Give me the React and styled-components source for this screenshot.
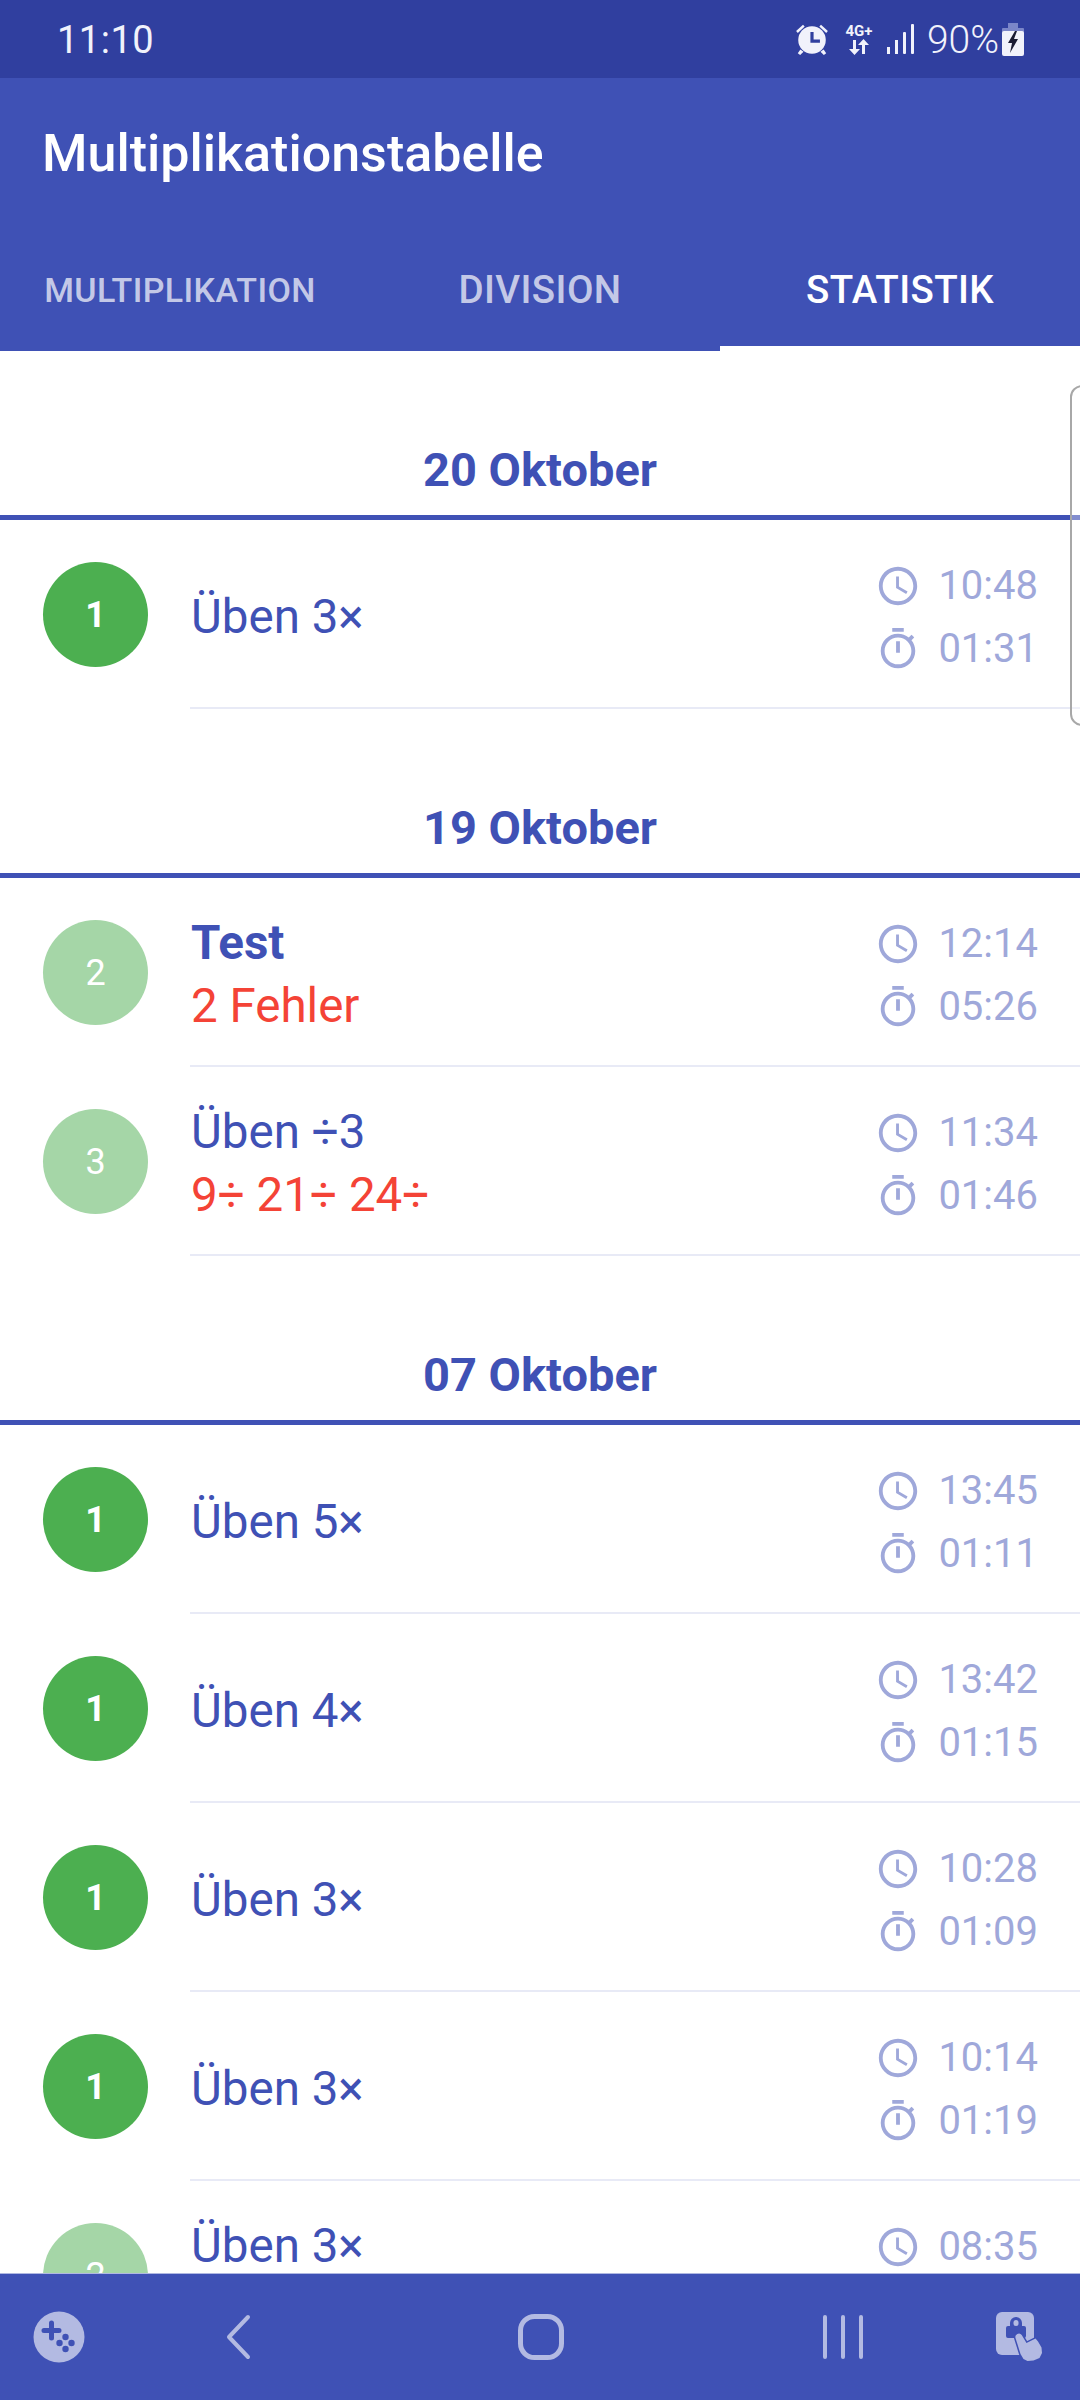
import React from "react";
import styled, { createGlobalStyle } from "styled-components";

const Global = createGlobalStyle`
  html, body { margin: 0; padding: 0; background: #fff; }
  * { box-sizing: border-box; }
`;

const Screen = styled.div`
  position: relative;
  width: 1080px;
  height: 2400px;
  display: flex;
  flex-direction: column;
  overflow: hidden;
  font-family: Roboto, "Noto Sans", sans-serif;
  background: #fff;
`;

const StatusBar = styled.div`
  height: 78px;
  flex: none;
  background: #303f9f;
  display: flex;
  align-items: center;
  justify-content: space-between;
  padding: 0 56px 0 57px;
  color: #f1f2fb;
`;
const Clock = styled.span`
  font-size: 38px;
  line-height: 1;
  letter-spacing: 0.5px;
  margin-top: 2px;
`;
const StatusIcons = styled.div`
  display: flex;
  align-items: center;
`;
const Network = styled.div`
  width: 32px;
  margin: 0 12px 0 13px;
  display: flex;
  flex-direction: column;
  align-items: center;
`;
const NetworkLabel = styled.span`
  font-size: 15px;
  line-height: 15px;
  font-weight: 700;
  white-space: nowrap;
`;
const Percent = styled.span`
  font-size: 39px;
  line-height: 1;
  font-weight: 300;
  margin: 2px 3px 0 12px;
`;

const AppBar = styled.header`
  flex: none;
  height: 273px;
  background: #3f51b5;
  display: flex;
  flex-direction: column;
`;
const Title = styled.h1`
  margin: 0;
  height: 152px;
  padding: 47px 0 0 42px;
  color: #fff;
  font-size: 52px;
  line-height: 58px;
  font-weight: 500;
`;
const Tabs = styled.nav`
  flex: 1;
  display: grid;
  grid-template-columns: repeat(3, 1fr);
`;
const Tab = styled.div`
  display: flex;
  align-items: center;
  justify-content: center;
  padding-top: 3px;
  font-size: ${(p) => p.$size}px;
  font-weight: 500;
  letter-spacing: 0.4px;
  color: ${(p) => (p.$active ? "#ffffff" : "rgba(255,255,255,0.7)")};
  border-bottom: 5px solid ${(p) => (p.$active ? "#ffffff" : "transparent")};
`;

const List = styled.main`
  flex: 1;
  min-height: 0;
  overflow: hidden;
`;
const SectionTitle = styled.div`
  height: 169px;
  display: flex;
  align-items: flex-end;
  justify-content: center;
  padding-bottom: 20px;
  color: #3f51b5;
  font-size: 47px;
  line-height: 50px;
  font-weight: 700;
  border-bottom: 5px solid #3f51b5;
`;
const Row = styled.div`
  height: 189px;
  display: flex;
  align-items: center;
  padding-left: 43px;
`;
const Badge = styled.div`
  width: 105px;
  height: 105px;
  flex: none;
  border-radius: 50%;
  display: flex;
  align-items: center;
  justify-content: center;
  color: #fff;
  font-size: 36px;
  font-weight: ${(p) => (p.$best ? 700 : 400)};
  background: ${(p) => (p.$best ? "#4caf50" : "#a5d6a7")};
`;
const RowBody = styled.div`
  flex: 1;
  height: 100%;
  margin-left: 42px;
  padding: 7px 42px 0 1px;
  display: flex;
  align-items: center;
  justify-content: space-between;
  border-bottom: 2px solid #e8eaf6;
`;
const Texts = styled.div`
  display: flex;
  flex-direction: column;
`;
const Name = styled.div`
  color: #3f51b5;
  font-size: 47.500px;
  line-height: 63px;
  font-weight: ${(p) => (p.$bold ? 700 : 400)};
`;
const Mistakes = styled.div`
  color: #f44336;
  font-size: 47.500px;
  line-height: 63px;
  min-height: 63px;
`;
const Times = styled.div`
  display: flex;
  flex-direction: column;
`;
const TimeLine = styled.div`
  height: 63px;
  display: flex;
  align-items: center;
  justify-content: flex-end;
  gap: 17px;
  color: #9fa8da;
  font-size: 40px;
`;

const NavBar = styled.footer`
  flex: none;
  height: 127px;
  background: #3f51b5;
  border-top: 1px solid #b0b8e2;
  display: grid;
  grid-template-columns: 118px 240px 366px 238px 118px;
  align-items: center;
`;
const NavSlot = styled.div`
  display: flex;
  align-items: center;
  justify-content: center;
`;
const EdgeHandle = styled.div`
  position: absolute;
  top: 385px;
  right: -14px;
  width: 24px;
  height: 341px;
  border: 2px solid #a8a8a8;
  border-radius: 12px;
  background: rgba(255, 255, 255, 0.35);
`;

const ClockIcon = () => (
  <svg width="46" height="46" viewBox="0 0 24 24" fill="#9fa8da">
    <path d="M11.99 2C6.47 2 2 6.48 2 12s4.47 10 9.99 10C17.52 22 22 17.52 22 12S17.52 2 11.99 2zM12 20c-4.42 0-8-3.58-8-8s3.58-8 8-8 8 3.58 8 8-3.58 8-8 8zm.5-13H11v6l5.25 3.15.75-1.23-4.5-2.67z" />
  </svg>
);
const TimerIcon = () => (
  <svg width="46" height="46" viewBox="0 0 24 24" fill="#9fa8da">
    <path d="M15 1H9v2h6V1zm-4 13h2V8h-2v6zm8.03-6.61l1.42-1.42c-.43-.51-.9-.99-1.41-1.41l-1.42 1.42C16.07 4.74 14.12 4 12 4c-4.97 0-9 4.03-9 9s4.02 9 9 9 9-4.03 9-9c0-2.12-.74-4.07-1.97-5.61zM12 20c-3.87 0-7-3.13-7-7s3.13-7 7-7 7 3.13 7 7-3.13 7-7 7z" />
  </svg>
);
const AlarmIcon = () => (
  <svg width="36" height="36" viewBox="0 0 34 34" fill="#f1f2fb">
    <circle cx="17" cy="18" r="13" />
    <path d="M2 9.500 8.500 3.500l1.600 1.800-6.500 6zM32 9.500l-6.500-6-1.600 1.800 6.500 6zM6 27l3 2-3.200 3.200-2.200-1.800zM28 27l-3 2 3.200 3.200 2.200-1.800z" />
    <path d="M15.500 10.500h3v7h6v3h-9z" fill="#303f9f" />
  </svg>
);
const ArrowsIcon = () => (
  <svg width="24" height="16" viewBox="0 0 24 16" fill="#f1f2fb">
    <path d="M5 1h3v9h4l-5.500 6L1 10h4zM17 15h-3V6H10l5.500-6L21 6h-4z" transform="translate(1 0)" />
  </svg>
);
const SignalIcon = () => (
  <svg width="28" height="30" viewBox="0 0 28 30" fill="#f1f2fb">
    <rect x="0" y="23" width="3" height="7" />
    <rect x="8" y="16" width="3" height="14" />
    <rect x="16" y="8" width="3" height="22" rx="1" />
    <rect x="24" y="0" width="3" height="30" rx="1" />
  </svg>
);
const BatteryIcon = () => (
  <svg width="22" height="33" viewBox="0 0 22 33">
    <rect x="6" y="0" width="10" height="6" fill="#7b86c8" />
    <rect x="0" y="5" width="22" height="6" rx="1" fill="#7b86c8" />
    <rect x="0" y="8" width="22" height="25" rx="2" fill="#f1f2fb" />
    <path d="M13 8 6 20h4l-2 10 8-14h-4l3-8z" fill="#1a1c33" />
  </svg>
);

const navColor = "#b3bae2";
const GameIcon = () => (
  <svg width="52" height="52" viewBox="0 0 52 52">
    <circle cx="26" cy="26" r="25.500" fill={navColor} />
    <path d="M16 12a2.500 2.500 0 0 1 5 0v5h5a2.500 2.500 0 0 1 0 5h-5v5a2.500 2.500 0 0 1-5 0v-5h-5a2.500 2.500 0 0 1 0-5h5z" fill="#3f51b5" />
    <circle cx="32.500" cy="26" r="3.200" fill="#3f51b5" />
    <circle cx="26.500" cy="32" r="3.200" fill="#3f51b5" />
    <circle cx="38.500" cy="32" r="3.200" fill="#3f51b5" />
    <circle cx="32.500" cy="38" r="3.200" fill="#3f51b5" />
  </svg>
);
const BackIcon = () => (
  <svg width="26" height="46" viewBox="0 0 26 46" fill="none" stroke={navColor} strokeWidth="4" strokeLinecap="round" strokeLinejoin="round">
    <path d="M23 3 4 23l19 20" />
  </svg>
);
const HomeIcon = () => (
  <svg width="46" height="46" viewBox="0 0 46 46" fill="none" stroke={navColor} strokeWidth="5">
    <rect x="2.500" y="2.500" width="41" height="41" rx="14" />
  </svg>
);
const RecentsIcon = () => (
  <svg width="42" height="44" viewBox="0 0 42 44" fill={navColor}>
    <rect x="1" y="0" width="4" height="44" rx="2" />
    <rect x="19" y="0" width="4" height="44" rx="2" />
    <rect x="37" y="0" width="4" height="44" rx="2" />
  </svg>
);
const LockTouchIcon = () => (
  <svg width="50" height="50" viewBox="0 0 50 50">
    <rect x="0" y="0" width="38" height="43" rx="6" fill={navColor} />
    <path d="M10 16a2 2 0 0 1 2-2h2v-3a6 6 0 0 1 12 0v3h2a2 2 0 0 1 2 2v8a2 2 0 0 1-2 2H12a2 2 0 0 1-2-2z" fill="#3f51b5" />
    <rect x="17.500" y="8" width="5" height="6" rx="2.500" fill={navColor} />
    <path
      d="M19.500 26a3.500 3.500 0 0 1 6.200-3l4.800 8 9-4.500 2.500 3 3.500 6 .5 5.500-2.500 5-6 2.500-6 .5-4-2-3-5z"
      fill={navColor}
      stroke="#3f51b5"
      strokeWidth="3"
      paintOrder="stroke"
      strokeLinejoin="round"
    />
  </svg>
);

const sections = [
  {
    date: "20 Oktober",
    rows: [{ n: 1, name: "Üben 3×", clock: "10:48", dur: "01:31" }],
  },
  {
    date: "19 Oktober",
    rows: [
      { n: 2, name: "Test", bold: true, sub: "2 Fehler", clock: "12:14", dur: "05:26" },
      { n: 3, name: "Üben ÷3", sub: "9÷ 21÷ 24÷", clock: "11:34", dur: "01:46" },
    ],
  },
  {
    date: "07 Oktober",
    rows: [
      { n: 1, name: "Üben 5×", clock: "13:45", dur: "01:11" },
      { n: 1, name: "Üben 4×", clock: "13:42", dur: "01:15" },
      { n: 1, name: "Üben 3×", clock: "10:28", dur: "01:09" },
      { n: 1, name: "Üben 3×", clock: "10:14", dur: "01:19" },
      { n: 2, name: "Üben 3×", sub: "\u00a0", clock: "08:35", dur: "" },
    ],
  },
];

export default function App() {
  return (
    <Screen>
      <Global />
      <StatusBar>
        <Clock>11:10</Clock>
        <StatusIcons>
          <AlarmIcon />
          <Network>
            <NetworkLabel>4G+</NetworkLabel>
            <ArrowsIcon />
          </Network>
          <SignalIcon />
          <Percent>90%</Percent>
          <BatteryIcon />
        </StatusIcons>
      </StatusBar>
      <AppBar>
        <Title>Multiplikationstabelle</Title>
        <Tabs>
          <Tab $size={34}>MULTIPLIKATION</Tab>
          <Tab $size={38.500}>DIVISION</Tab>
          <Tab $size={38.500} $active>STATISTIK</Tab>
        </Tabs>
      </AppBar>
      <List>
        {sections.map((s) => (
          <section key={s.date}>
            <SectionTitle>{s.date}</SectionTitle>
            {s.rows.map((r) => (
              <Row key={r.clock}>
                <Badge $best={r.n === 1}>{r.n}</Badge>
                <RowBody>
                  <Texts>
                    <Name $bold={r.bold}>{r.name}</Name>
                    {r.sub && <Mistakes>{r.sub}</Mistakes>}
                  </Texts>
                  <Times>
                    <TimeLine><ClockIcon />{r.clock}</TimeLine>
                    <TimeLine>{r.dur && <TimerIcon />}{r.dur}</TimeLine>
                  </Times>
                </RowBody>
              </Row>
            ))}
          </section>
        ))}
      </List>
      <NavBar>
        <NavSlot><GameIcon /></NavSlot>
        <NavSlot><BackIcon /></NavSlot>
        <NavSlot><HomeIcon /></NavSlot>
        <NavSlot><RecentsIcon /></NavSlot>
        <NavSlot><LockTouchIcon /></NavSlot>
      </NavBar>
      <EdgeHandle />
    </Screen>
  );
}
